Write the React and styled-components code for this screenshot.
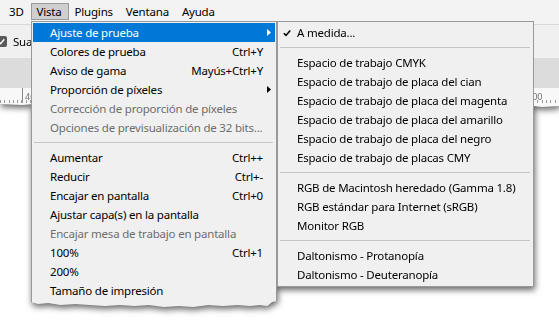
import React from 'react';
import styled, { createGlobalStyle } from 'styled-components';

const GlobalStyle = createGlobalStyle`
  html, body {
    margin: 0;
    background: #fff;
  }
  body {
    font-family: "Noto Sans", "Segoe UI", sans-serif;
    font-size: 11.5px;
    letter-spacing: -0.2px;
    color: #000;
  }
`;

// torn paper edge: points run right to left, [x %, px above the bottom]
const tornEdge = (pts) =>
    `polygon(0 0, 100% 0, ${pts.map(([x, y]) => `${x}% calc(100% - ${y}px)`).join(', ')})`;

const chromeTear = tornEdge([
    [100, 2], [97, 1], [94, 3], [90, 2], [86, 4], [82, 3], [77, 5], [72, 3], [66, 4],
    [60, 2], [54, 4], [48, 3], [42, 5], [36, 3], [30, 4], [24, 2], [18, 4], [12, 3],
    [8, 5], [4, 3], [0, 4],
]);

const menuTear = tornEdge([
    [100, 6], [98, 5], [96, 1], [93, 2], [89, 1], [84, 2], [78, 1], [72, 2], [66, 0],
    [60, 1], [54, 0], [48, 2], [42, 1], [36, 2], [30, 1], [24, 2], [18, 3], [12, 2],
    [7, 4], [3, 3], [0, 5],
]);

const Page = styled.div`
    width: 559px;
    height: 333px;
    overflow: hidden;
`;

const Shot = styled.div`
    position: relative;
    filter: drop-shadow(1px 3px 3px rgba(0, 0, 0, 0.6));
`;

const Chrome = styled.div`
    display: flex;
    flex-direction: column;
    clip-path: ${chromeTear};
`;

const MenuBar = styled.div`
    display: flex;
    align-items: flex-start;
    height: 24px;
    padding: 3px 0 0 3px;
    box-sizing: border-box;
    background: #f3f3f3;
`;

const BarItem = styled.div`
    height: 17px;
    line-height: 15px;
    padding: 0 6px 0 5px;
    box-sizing: border-box;
    border: 1px solid ${p => (p.$open ? '#9a9a9a' : 'transparent')};
    background: ${p => (p.$open ? '#cfcfcf' : 'transparent')};
    white-space: nowrap;
`;

const OptionsBar = styled.div`
    display: flex;
    align-items: center;
    gap: 6px;
    height: 34px;
    border-top: 1px solid #d9d9d9;
    box-sizing: border-box;
    background: #f0f0f0;
`;

const CheckBox = styled.span`
    display: inline-flex;
    align-items: center;
    justify-content: center;
    width: 11px;
    height: 11px;
    margin-left: -4px;
    border-radius: 2px;
    background: #5a5a5a;
`;

const TabBand = styled.div`
    height: 30px;
    background: #dcdcdc;
`;

const Ruler = styled.div`
    display: flex;
    height: 20px;
    background:
        repeating-linear-gradient(90deg, #9a9a9a 0 1px, transparent 1px 4.3px) 0 12px / 100% 3px no-repeat,
        #f8f8f8;
`;

const RulerMark = styled.span`
    width: 20px;
    flex: none;
    margin-left: ${p => p.$at}px;
    height: 13px;
    padding: 4px 0 0 2px;
    box-sizing: border-box;
    border-left: 1px solid #8a8a8a;
    font-size: 9px;
    line-height: 9px;
    letter-spacing: 0;
    color: #707070;
`;

const MenuLayer = styled.div`
    position: absolute;
    top: 21px;
    left: 31px;
    display: flex;
    align-items: flex-start;
`;

const Menu = styled.div`
    width: ${p => p.$width}px;
    box-sizing: border-box;
    padding: 1px 1px ${p => (p.$torn ? 7 : 2)}px;
    border: 1px solid #999;
    border-bottom: ${p => (p.$torn ? 'none' : '1px solid #999')};
    background: #f0f0f0;
    clip-path: ${p => (p.$torn ? menuTear : 'none')};
`;

const Item = styled.div`
    display: flex;
    align-items: center;
    height: 19px;
    line-height: 19px;
    white-space: nowrap;
    color: ${p => (p.$disabled ? '#6d6d6d' : p.$active ? '#fff' : '#000')};
    background: ${p => (p.$active ? '#0078d7' : 'transparent')};
`;

const Lead = styled.span`
    display: flex;
    align-items: center;
    width: ${p => p.$width}px;
    flex: none;
    padding-left: 4px;
    box-sizing: border-box;
`;

const Label = styled.span`
    flex: 1;
`;

const Shortcut = styled.span``;

const ArrowCell = styled.span`
    display: flex;
    justify-content: center;
    width: 12px;
    flex: none;
`;

const Separator = styled.div`
    display: flex;
    align-items: center;
    height: 11px;
    padding: 0 2px 0 1px;

    &::after {
        content: '';
        flex: 1;
        height: 1px;
        background: #c6c6c6;
    }
`;

const Arrow = ({ color }) => (
    <svg width="4" height="7" viewBox="0 0 4 7">
        <polygon points="0,0 4,3.5 0,7" fill={color} />
    </svg>
);

const Tick = ({ color = '#000', size = 8 }) => (
    <svg width={size} height={size} viewBox="0 0 8 8">
        <path d="M0.8 4.2 L3 6.4 L7.2 1.4" fill="none" stroke={color} strokeWidth="1.6" />
    </svg>
);

const viewItems = [
    { label: 'Ajuste de prueba', sub: true, active: true },
    { label: 'Colores de prueba', key: 'Ctrl+Y' },
    { label: 'Aviso de gama', key: 'Mayús+Ctrl+Y' },
    { label: 'Proporción de píxeles', sub: true },
    { label: 'Corrección de proporción de píxeles', disabled: true },
    { label: 'Opciones de previsualización de 32 bits...', disabled: true },
    null,
    { label: 'Aumentar', key: 'Ctrl++' },
    { label: 'Reducir', key: 'Ctrl+-' },
    { label: 'Encajar en pantalla', key: 'Ctrl+0' },
    { label: 'Ajustar capa(s) en la pantalla' },
    { label: 'Encajar mesa de trabajo en pantalla', disabled: true },
    { label: '100%', key: 'Ctrl+1' },
    { label: '200%' },
    { label: 'Tamaño de impresión' },
];

const proofItems = [
    { label: 'A medida...', checked: true },
    null,
    { label: 'Espacio de trabajo CMYK' },
    { label: 'Espacio de trabajo de placa del cian' },
    { label: 'Espacio de trabajo de placa del magenta' },
    { label: 'Espacio de trabajo de placa del amarillo' },
    { label: 'Espacio de trabajo de placa del negro' },
    { label: 'Espacio de trabajo de placas CMY' },
    null,
    { label: 'RGB de Macintosh heredado (Gamma 1.8)' },
    { label: 'RGB estándar para Internet (sRGB)' },
    { label: 'Monitor RGB' },
    null,
    { label: 'Daltonismo - Protanopía' },
    { label: 'Daltonismo - Deuteranopía' },
];

function MenuList({ items, lead, arrows }) {
    return items.map((item, i) => {
        if (!item) return <Separator key={i} />;
        return (
            <Item key={i} $active={item.active} $disabled={item.disabled}>
                <Lead $width={lead}>{item.checked && <Tick />}</Lead>
                <Label>{item.label}</Label>
                {item.key && <Shortcut>{item.key}</Shortcut>}
                {arrows && <ArrowCell>{item.sub && <Arrow color={item.active ? '#fff' : '#000'} />}</ArrowCell>}
            </Item>
        );
    });
}

export default function App() {
    return (
        <Page>
            <GlobalStyle />
            <Shot>
                <Chrome>
                    <MenuBar>
                        <BarItem>3D</BarItem>
                        <BarItem $open>Vista</BarItem>
                        <BarItem>Plugins</BarItem>
                        <BarItem>Ventana</BarItem>
                        <BarItem>Ayuda</BarItem>
                    </MenuBar>
                    <OptionsBar>
                        <CheckBox>
                            <Tick color="#fff" size={7} />
                        </CheckBox>
                        <span>Suavizar</span>
                    </OptionsBar>
                    <TabBand />
                    <Ruler>
                        <RulerMark $at={22}>40</RulerMark>
                        <RulerMark $at={482}>300</RulerMark>
                    </Ruler>
                </Chrome>
                <MenuLayer>
                    <Menu $width={246} $torn>
                        <MenuList items={viewItems} lead={17} arrows />
                    </Menu>
                    <Menu $width={257}>
                        <MenuList items={proofItems} lead={18} />
                    </Menu>
                </MenuLayer>
            </Shot>
        </Page>
    );
}
